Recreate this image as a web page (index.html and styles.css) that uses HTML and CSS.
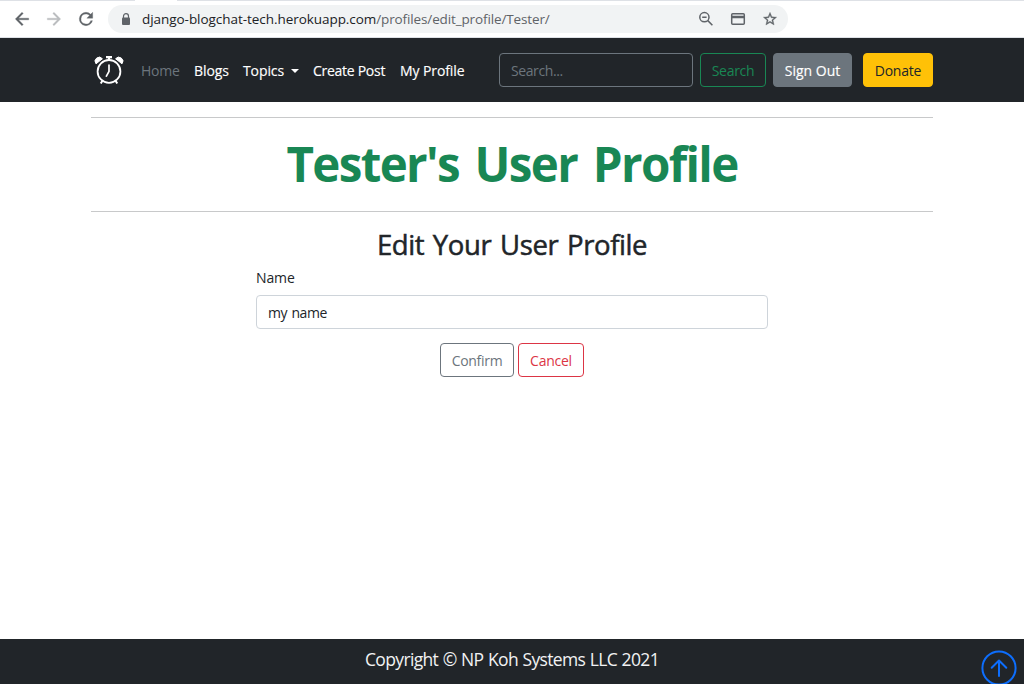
FILE: index.html
```html
<!DOCTYPE html>
<html lang="en">
<head>
<meta charset="utf-8">
<title>Edit Profile</title>
<link rel="stylesheet" href="styles.css">
</head>
<body>
<div class="browser">
  <div class="tabs"><span class="tab"></span></div>
  <div class="toolbar">
    <svg class="tool" viewBox="0 0 24 24" fill="#5f6368" stroke="#5f6368" stroke-width=".4"><path d="M20 11H7.83l5.59-5.59L12 4l-8 8 8 8 1.41-1.41L7.83 13H20v-2z"/></svg>
    <svg class="tool" viewBox="0 0 24 24" fill="#babcbe" stroke="#babcbe" stroke-width=".4"><path d="M12 4l-1.41 1.41L16.17 11H4v2h12.17l-5.58 5.59L12 20l8-8z"/></svg>
    <svg class="tool" viewBox="0 0 24 24" fill="#5f6368" stroke="#5f6368" stroke-width=".4"><path d="M17.65 6.35A7.96 7.96 0 0 0 12 4a8 8 0 1 0 7.73 10h-2.08A6 6 0 1 1 12 6c1.66 0 3.14.69 4.22 1.78L13 11h7V4l-2.35 2.35z"/></svg>
    <div class="omnibox">
      <svg class="lock" viewBox="0 0 10 13"><rect x="1" y="4.5" width="8" height="7.5" rx="1" fill="#5f6368"/><path d="M2.5 5V3.2a2.5 2.5 0 0 1 5 0V5" fill="none" stroke="#5f6368" stroke-width="1.2"/></svg>
      <span class="url"><span class="host">django-blogchat-tech.herokuapp.com</span><span class="path">/profiles/edit_profile/Tester/</span></span>
      <div class="actions">
        <svg viewBox="0 0 16 16" fill="none" stroke="#5f6368" stroke-width="1.5"><circle cx="6.4" cy="6.2" r="4.6"/><path d="M9.8 9.6l4.6 4.6M4.2 6.2h4.4"/></svg>
        <svg viewBox="0 0 16 16" fill="none" stroke="#5f6368" stroke-width="1.5"><rect x="1.7" y="2.7" width="12.6" height="10.6" rx="1"/><path d="M2 6h12" stroke-width="2.5"/></svg>
        <svg viewBox="0 0 24 24" fill="#5f6368" stroke="#5f6368" stroke-width=".5"><path d="M22 9.24l-7.19-.62L12 2 9.19 8.63 2 9.24l5.46 4.73L5.82 21 12 17.27 18.18 21l-1.63-7.03L22 9.24zM12 15.4l-3.76 2.27 1-4.28-3.32-2.88 4.38-.38L12 6.1l1.71 4.04 4.38.38-3.32 2.88 1 4.28L12 15.4z"/></svg>
      </div>
    </div>
  </div>
</div>
<nav class="navbar">
  <div class="container nav-row">
    <svg class="brand" viewBox="0 0 32 32" fill="none" stroke="#fff"><circle cx="16" cy="17.4" r="11.4" stroke-width="1.8"/><path d="M16 11v6.4l-2.6 4.8" stroke-width="1.7" stroke-linecap="round" stroke-linejoin="round"/><path d="M13 3.1h6M16 3v3" stroke-width="2.2"/><path d="M9.4 26.8l-1.6 2.7M22.6 26.8l1.6 2.7" stroke-width="2"/><path d="M3 9.8A4 4 0 0 1 9.4 4.8zM29 9.8A4 4 0 0 0 22.6 4.8z" fill="#fff" stroke-width="1" stroke-linejoin="round"/></svg>
    <div class="links">
      <a class="link home">Home</a>
      <a class="link blogs">Blogs</a>
      <a class="link topics">Topics<i class="caret"></i></a>
      <a class="link create">Create Post</a>
      <a class="link profile">My Profile</a>
    </div>
    <div class="tools">
      <div class="search">Search...</div>
      <a class="btn green">Search</a>
      <a class="btn gray">Sign Out</a>
      <a class="btn yellow">Donate</a>
    </div>
  </div>
</nav>
<main class="container">
  <header class="title-box"><h1 class="title">Tester's User Profile</h1></header>
  <h2 class="subtitle">Edit Your User Profile</h2>
  <form class="form">
    <label class="label">Name</label>
    <div class="field">my name</div>
    <div class="buttons">
      <a class="btn confirm">Confirm</a>
      <a class="btn cancel">Cancel</a>
    </div>
  </form>
</main>
<footer class="footer">
  <span class="copyright">Copyright © NP Koh Systems LLC 2021</span>
  <svg class="to-top" viewBox="0 0 36 36" fill="none" stroke="#0d6efd" stroke-width="2"><circle cx="18" cy="18" r="16.6"/><path d="M18 26V10.5M10.7 17.8L18 10.5l7.3 7.3" stroke-linecap="round" stroke-linejoin="round"/></svg>
</footer>
</body>
</html>
```

FILE: styles.css
```css
* { box-sizing: border-box; }
body {
  margin: 0;
  width: 1024px;
  height: 684px;
  overflow: hidden;
  display: flex;
  flex-direction: column;
  background: #fff;
  color: #212529;
  font-family: "Open Sans", "Noto Sans", sans-serif;
  font-size: 14px;
}
.browser { height: 38px; border-bottom: 1px solid #dee1e6; }
.tabs { height: 1px; background: #dee1e6; padding-left: 135px; }
.tab { display: block; width: 42px; height: 1px; background: #fff; }
.toolbar { height: 36px; display: flex; align-items: center; padding-left: 12px; }
.tool { width: 20px; height: 20px; margin-right: 12px; }
.omnibox {
  width: 680px;
  height: 28px;
  border-radius: 14px;
  background: #f1f3f4;
  display: flex;
  align-items: center;
  padding: 0 10px 0 13px;
}
.lock { width: 10px; height: 13px; margin-right: 11px; }
.url { white-space: nowrap; font-size: 13.5px; line-height: 20px; }
.host { color: #202124; letter-spacing: -0.05px; }
.path { color: #5f6368; letter-spacing: -0.13px; }
.actions { margin-left: auto; display: flex; gap: 16px; }
.actions svg { width: 16px; height: 16px; }
.navbar { height: 64px; background: #212529; }
.container { width: 842px; margin: 0 auto; }
.nav-row { height: 64px; display: flex; align-items: center; justify-content: space-between; }
.brand { width: 36px; height: 32px; margin-right: 14px; }
.links { display: flex; flex: 1; }
.link {
  color: #fff;
  -webkit-text-stroke: 0.15px currentColor;
  letter-spacing: -0.1px;
  white-space: nowrap;
  line-height: 20px;
  padding-top: 1px;
}
.home { width: 53px; color: #6c757d; -webkit-text-stroke: 0; letter-spacing: -0.2px; }
.blogs { width: 49px; }
.topics { width: 70px; }
.create { width: 87px; letter-spacing: -0.28px; }
.caret {
  display: inline-block;
  margin-left: 7px;
  vertical-align: 3px;
  border: 4.5px solid transparent;
  border-top-color: #fff;
  border-bottom: 0;
}
.tools { display: flex; }
.btn, .search, .field {
  height: 34px;
  border: 1px solid;
  border-radius: 4px;
  line-height: 20px;
  padding: 7px 0 5px;
  white-space: nowrap;
}
.btn { text-align: center; }
.search { width: 194px; margin-right: 7px; padding-left: 11px; border-color: #6c757d; color: #6c757d; letter-spacing: -0.4px; }
.green { width: 66px; margin-right: 7px; color: #198754; letter-spacing: -0.3px; }
.gray {
  width: 79px;
  margin-right: 11px;
  background: #6c757d;
  border-color: #6c757d;
  color: #fff;
  -webkit-text-stroke: 0.15px currentColor;
}
.yellow { width: 70px; background: #ffc107; border-color: #ffc107; color: #212529; letter-spacing: -0.2px; }
.title-box {
  margin-top: 15px;
  height: 95px;
  border-top: 1px solid #c8c9ca;
  border-bottom: 1px solid #c8c9ca;
  text-align: center;
}
.title {
  margin: 0;
  padding-top: 15px;
  color: #198754;
  font-size: 47.5px;
  font-weight: 700;
  line-height: 62px;
  letter-spacing: -1.65px;
  word-spacing: 5px;
  white-space: nowrap;
}
.subtitle {
  margin: 13px 0 0;
  text-align: center;
  font-size: 27.5px;
  line-height: 39px;
  font-weight: 400;
  letter-spacing: -0.4px;
  word-spacing: 2px;
  -webkit-text-stroke: 0.5px currentColor;
}
.form { width: 512px; margin: 3px auto 0; }
.label { display: block; height: 28px; line-height: 20px; padding-top: 1px; letter-spacing: -0.1px; }
.field { padding-left: 11px; border-color: #ced4da; letter-spacing: -0.4px; word-spacing: 1px; }
.buttons { display: flex; justify-content: center; gap: 4px; margin-top: 14px; }
.confirm { width: 74px; color: #6c757d; letter-spacing: -0.3px; }
.cancel { width: 66px; color: #dc3545; letter-spacing: -0.25px; }
.footer { position: relative; margin-top: auto; height: 45px; background: #212529; color: #f1f2f3; text-align: center; }
.copyright { font-size: 17.5px; line-height: 41px; letter-spacing: -0.65px; word-spacing: 0.6px; white-space: nowrap; }
.to-top { position: absolute; left: 981px; top: 11px; width: 36px; height: 36px; }
```
